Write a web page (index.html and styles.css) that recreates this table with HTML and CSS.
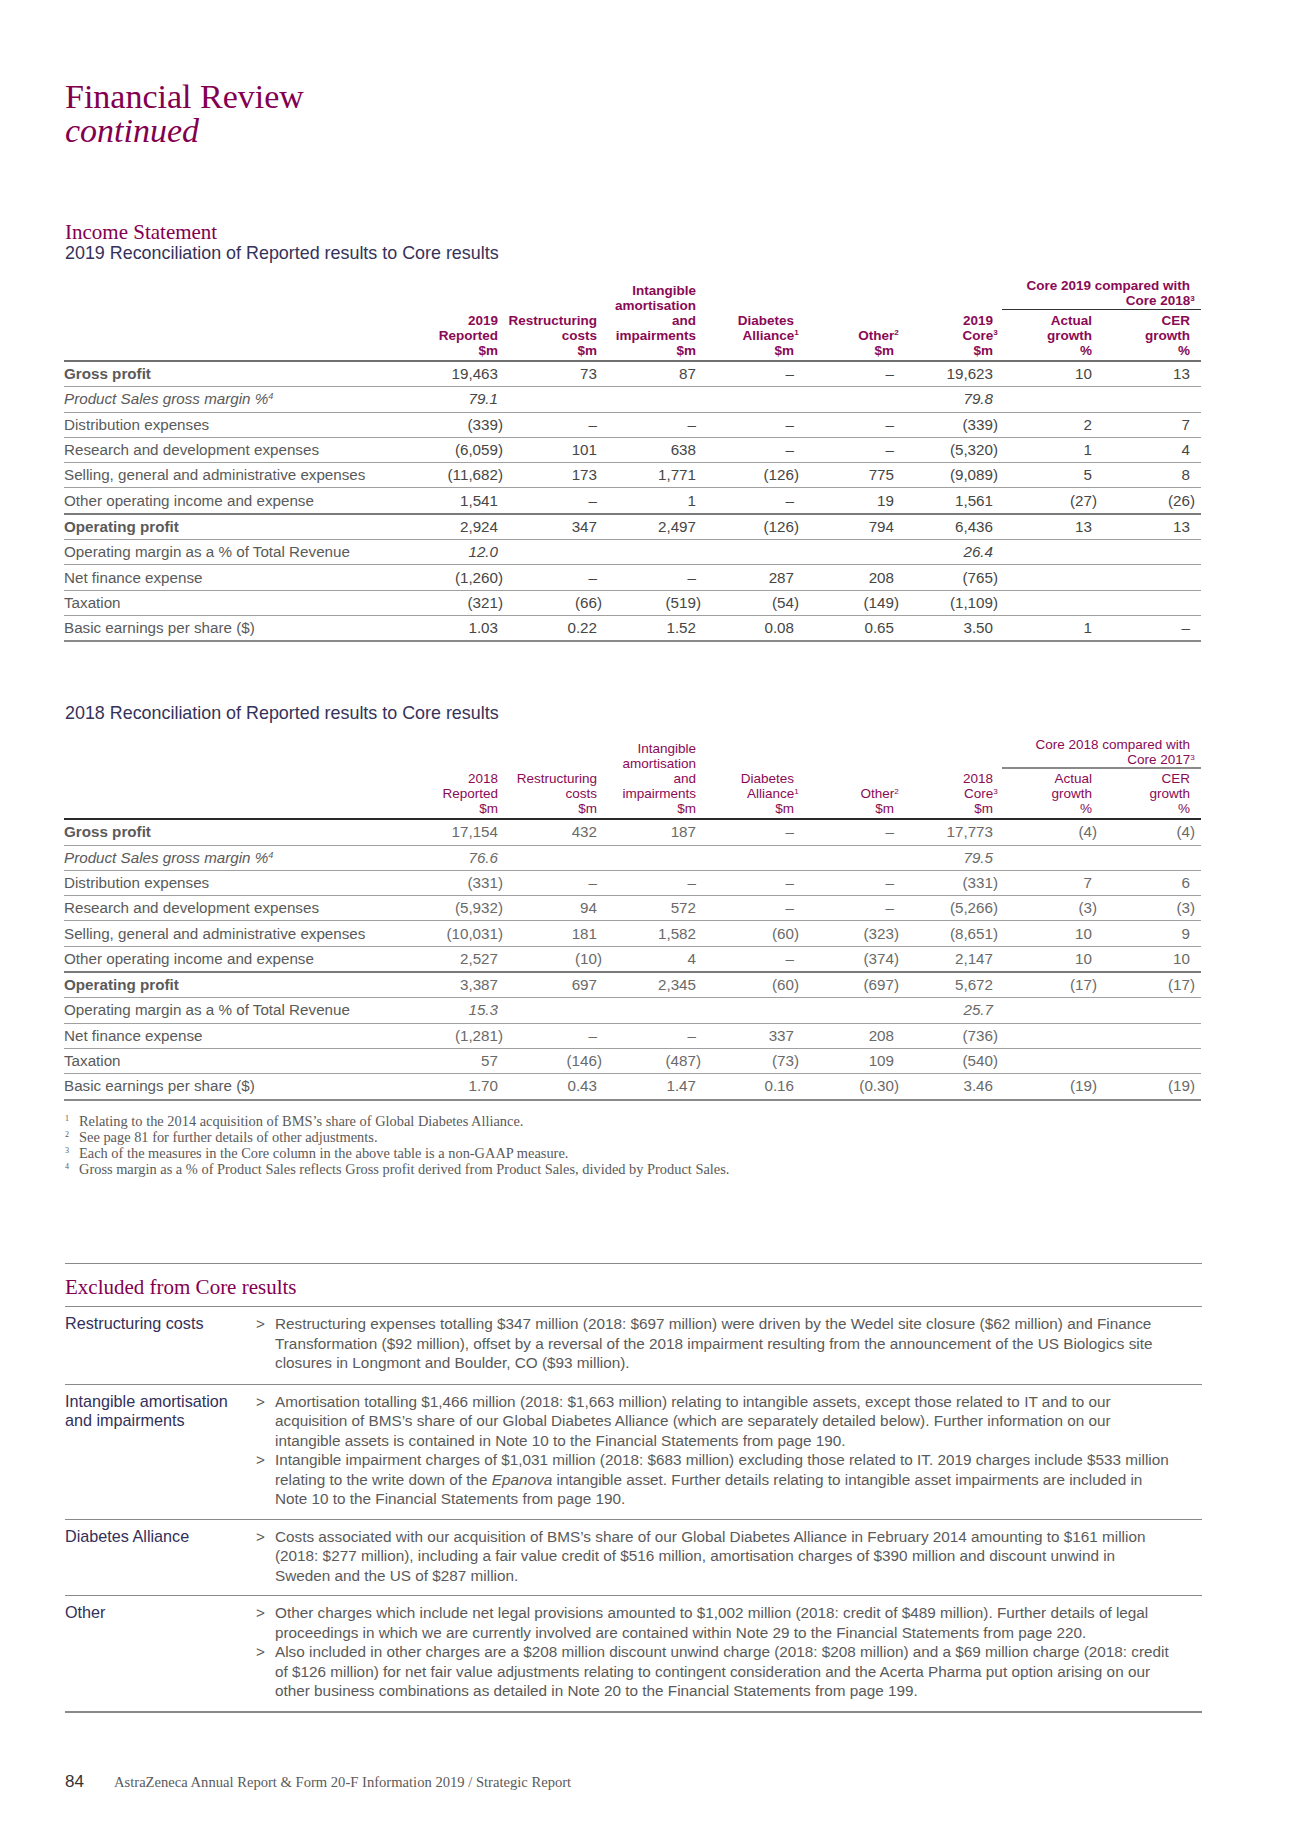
FILE: index.html
```html
<!DOCTYPE html>
<html lang="en">
<head>
<meta charset="utf-8">
<title>Financial Review continued</title>
<link rel="stylesheet" href="styles.css">
</head>
<body>
<div class="page">
  <h1 class="title">Financial Review<br><em>continued</em></h1>

  <h2 class="sec-title">Income Statement</h2>
  <h3 class="tbl-title">2019 Reconciliation of Reported results to Core results</h3>

  <table class="rec r19">
    <colgroup>
      <col class="w-lab"><col class="w-n"><col class="w-n1"><col class="w-n1"><col class="w-n"><col class="w-oth"><col class="w-core"><col class="w-act"><col class="w-cer">
    </colgroup>
    <thead>
      <tr>
        <th class="lab" rowspan="2"></th>
        <th rowspan="2">2019<br>Reported<br>$m</th>
        <th rowspan="2">Restructuring<br>costs<br>$m</th>
        <th rowspan="2">Intangible<br>amortisation<br>and<br>impairments<br>$m</th>
        <th rowspan="2">Diabetes<br>Alliance<sup>1</sup><br>$m</th>
        <th rowspan="2">Other<sup>2</sup><br>$m</th>
        <th rowspan="2" class="core">2019<br>Core<sup>3</sup><br>$m</th>
        <th colspan="2" class="grp">Core 2019 compared with<br>Core 2018<sup>3</sup></th>
      </tr>
      <tr>
        <th class="sub">Actual<br>growth<br>%</th>
        <th class="sub cer">CER<br>growth<br>%</th>
      </tr>
    </thead>
    <tbody>
      <tr class="b"><td class="lab">Gross profit</td><td>19,463</td><td>73</td><td>87</td><td>–</td><td>–</td><td class="core">19,623</td><td>10</td><td class="cer">13</td></tr>
      <tr class="it"><td class="lab">Product Sales gross margin %<sup>4</sup></td><td>79.1</td><td></td><td></td><td></td><td></td><td class="core">79.8</td><td></td><td class="cer"></td></tr>
      <tr><td class="lab">Distribution expenses</td><td>(339<span class="p">)</span></td><td>–</td><td>–</td><td>–</td><td>–</td><td class="core">(339<span class="p">)</span></td><td>2</td><td class="cer">7</td></tr>
      <tr><td class="lab">Research and development expenses</td><td>(6,059<span class="p">)</span></td><td>101</td><td>638</td><td>–</td><td>–</td><td class="core">(5,320<span class="p">)</span></td><td>1</td><td class="cer">4</td></tr>
      <tr><td class="lab">Selling, general and administrative expenses</td><td>(11,682<span class="p">)</span></td><td>173</td><td>1,771</td><td>(126<span class="p">)</span></td><td>775</td><td class="core">(9,089<span class="p">)</span></td><td>5</td><td class="cer">8</td></tr>
      <tr class="sep"><td class="lab">Other operating income and expense</td><td>1,541</td><td>–</td><td>1</td><td>–</td><td>19</td><td class="core">1,561</td><td>(27<span class="p">)</span></td><td class="cer">(26<span class="p">)</span></td></tr>
      <tr class="b"><td class="lab">Operating profit</td><td>2,924</td><td>347</td><td>2,497</td><td>(126<span class="p">)</span></td><td>794</td><td class="core">6,436</td><td>13</td><td class="cer">13</td></tr>
      <tr><td class="lab">Operating margin as a % of Total Revenue</td><td class="iv">12.0</td><td></td><td></td><td></td><td></td><td class="core iv">26.4</td><td></td><td class="cer"></td></tr>
      <tr><td class="lab">Net finance expense</td><td>(1,260<span class="p">)</span></td><td>–</td><td>–</td><td>287</td><td>208</td><td class="core">(765<span class="p">)</span></td><td></td><td class="cer"></td></tr>
      <tr><td class="lab">Taxation</td><td>(321<span class="p">)</span></td><td>(66<span class="p">)</span></td><td>(519<span class="p">)</span></td><td>(54<span class="p">)</span></td><td>(149<span class="p">)</span></td><td class="core">(1,109<span class="p">)</span></td><td></td><td class="cer"></td></tr>
      <tr class="last"><td class="lab">Basic earnings per share ($)</td><td>1.03</td><td>0.22</td><td>1.52</td><td>0.08</td><td>0.65</td><td class="core">3.50</td><td>1</td><td class="cer">–</td></tr>
    </tbody>
  </table>

  <h3 class="tbl-title t2">2018 Reconciliation of Reported results to Core results</h3>

  <table class="rec r18">
    <colgroup>
      <col class="w-lab"><col class="w-n"><col class="w-n1"><col class="w-n1"><col class="w-n"><col class="w-oth"><col class="w-core"><col class="w-act"><col class="w-cer">
    </colgroup>
    <thead>
      <tr>
        <th class="lab" rowspan="2"></th>
        <th rowspan="2">2018<br>Reported<br>$m</th>
        <th rowspan="2">Restructuring<br>costs<br>$m</th>
        <th rowspan="2">Intangible<br>amortisation<br>and<br>impairments<br>$m</th>
        <th rowspan="2">Diabetes<br>Alliance<sup>1</sup><br>$m</th>
        <th rowspan="2">Other<sup>2</sup><br>$m</th>
        <th rowspan="2" class="core">2018<br>Core<sup>3</sup><br>$m</th>
        <th colspan="2" class="grp">Core 2018 compared with<br>Core 2017<sup>3</sup></th>
      </tr>
      <tr>
        <th class="sub">Actual<br>growth<br>%</th>
        <th class="sub cer">CER<br>growth<br>%</th>
      </tr>
    </thead>
    <tbody>
      <tr class="b"><td class="lab">Gross profit</td><td>17,154</td><td>432</td><td>187</td><td>–</td><td>–</td><td class="core">17,773</td><td>(4<span class="p">)</span></td><td class="cer">(4<span class="p">)</span></td></tr>
      <tr class="it"><td class="lab">Product Sales gross margin %<sup>4</sup></td><td>76.6</td><td></td><td></td><td></td><td></td><td class="core">79.5</td><td></td><td class="cer"></td></tr>
      <tr><td class="lab">Distribution expenses</td><td>(331<span class="p">)</span></td><td>–</td><td>–</td><td>–</td><td>–</td><td class="core">(331<span class="p">)</span></td><td>7</td><td class="cer">6</td></tr>
      <tr><td class="lab">Research and development expenses</td><td>(5,932<span class="p">)</span></td><td>94</td><td>572</td><td>–</td><td>–</td><td class="core">(5,266<span class="p">)</span></td><td>(3<span class="p">)</span></td><td class="cer">(3<span class="p">)</span></td></tr>
      <tr><td class="lab">Selling, general and administrative expenses</td><td>(10,031<span class="p">)</span></td><td>181</td><td>1,582</td><td>(60<span class="p">)</span></td><td>(323<span class="p">)</span></td><td class="core">(8,651<span class="p">)</span></td><td>10</td><td class="cer">9</td></tr>
      <tr class="sep"><td class="lab">Other operating income and expense</td><td>2,527</td><td>(10<span class="p">)</span></td><td>4</td><td>–</td><td>(374<span class="p">)</span></td><td class="core">2,147</td><td>10</td><td class="cer">10</td></tr>
      <tr class="b"><td class="lab">Operating profit</td><td>3,387</td><td>697</td><td>2,345</td><td>(60<span class="p">)</span></td><td>(697<span class="p">)</span></td><td class="core">5,672</td><td>(17<span class="p">)</span></td><td class="cer">(17<span class="p">)</span></td></tr>
      <tr><td class="lab">Operating margin as a % of Total Revenue</td><td class="iv">15.3</td><td></td><td></td><td></td><td></td><td class="core iv">25.7</td><td></td><td class="cer"></td></tr>
      <tr><td class="lab">Net finance expense</td><td>(1,281<span class="p">)</span></td><td>–</td><td>–</td><td>337</td><td>208</td><td class="core">(736<span class="p">)</span></td><td></td><td class="cer"></td></tr>
      <tr><td class="lab">Taxation</td><td>57</td><td>(146<span class="p">)</span></td><td>(487<span class="p">)</span></td><td>(73<span class="p">)</span></td><td>109</td><td class="core">(540<span class="p">)</span></td><td></td><td class="cer"></td></tr>
      <tr class="last"><td class="lab">Basic earnings per share ($)</td><td>1.70</td><td>0.43</td><td>1.47</td><td>0.16</td><td>(0.30<span class="p">)</span></td><td class="core">3.46</td><td>(19<span class="p">)</span></td><td class="cer">(19<span class="p">)</span></td></tr>
    </tbody>
  </table>

  <ol class="notes">
    <li><span class="nn">1</span><span>Relating to the 2014 acquisition of BMS’s share of Global Diabetes Alliance.</span></li>
    <li><span class="nn">2</span><span>See page 81 for further details of other adjustments.</span></li>
    <li><span class="nn">3</span><span>Each of the measures in the Core column in the above table is a non-GAAP measure.</span></li>
    <li><span class="nn">4</span><span>Gross margin as a % of Product Sales reflects Gross profit derived from Product Sales, divided by Product Sales.</span></li>
  </ol>

  <section class="excl">
    <h2 class="excl-title">Excluded from Core results</h2>
    <div class="ex-row r1">
      <div class="ex-lab">Restructuring costs</div>
      <div class="ex-body">
        <div class="bl"><span class="mk">&gt;</span><span class="bt">Restructuring expenses totalling $347 million (2018: $697 million) were driven by the Wedel site closure ($62 million) and Finance<br>Transformation ($92 million), offset by a reversal of the 2018 impairment resulting from the announcement of the US Biologics site<br>closures in Longmont and Boulder, CO ($93 million).</span></div>
      </div>
    </div>
    <div class="ex-row">
      <div class="ex-lab">Intangible amortisation<br>and impairments</div>
      <div class="ex-body">
        <div class="bl"><span class="mk">&gt;</span><span class="bt">Amortisation totalling $1,466 million (2018: $1,663 million) relating to intangible assets, except those related to IT and to our<br>acquisition of BMS’s share of our Global Diabetes Alliance (which are separately detailed below). Further information on our<br>intangible assets is contained in Note 10 to the Financial Statements from page 190.</span></div>
        <div class="bl"><span class="mk">&gt;</span><span class="bt">Intangible impairment charges of $1,031 million (2018: $683 million) excluding those related to IT. 2019 charges include $533 million<br>relating to the write down of the <em>Epanova</em> intangible asset. Further details relating to intangible asset impairments are included in<br>Note 10 to the Financial Statements from page 190.</span></div>
      </div>
    </div>
    <div class="ex-row">
      <div class="ex-lab">Diabetes Alliance</div>
      <div class="ex-body">
        <div class="bl"><span class="mk">&gt;</span><span class="bt">Costs associated with our acquisition of BMS’s share of our Global Diabetes Alliance in February 2014 amounting to $161 million<br>(2018: $277 million), including a fair value credit of $516 million, amortisation charges of $390 million and discount unwind in<br>Sweden and the US of $287 million.</span></div>
      </div>
    </div>
    <div class="ex-row last">
      <div class="ex-lab">Other</div>
      <div class="ex-body">
        <div class="bl"><span class="mk">&gt;</span><span class="bt">Other charges which include net legal provisions amounted to $1,002 million (2018: credit of $489 million). Further details of legal<br>proceedings in which we are currently involved are contained within Note 29 to the Financial Statements from page 220.</span></div>
        <div class="bl"><span class="mk">&gt;</span><span class="bt">Also included in other charges are a $208 million discount unwind charge (2018: $208 million) and a $69 million charge (2018: credit<br>of $126 million) for net fair value adjustments relating to contingent consideration and the Acerta Pharma put option arising on our<br>other business combinations as detailed in Note 20 to the Financial Statements from page 199.</span></div>
      </div>
    </div>
  </section>

  <footer class="foot">
    <span class="pg">84</span>
    <span class="ft">AstraZeneca Annual Report &amp; Form 20-F Information 2019 / Strategic Report</span>
  </footer>
</div>
</body>
</html>
```

FILE: styles.css
```css
html, body {
  margin: 0;
  padding: 0;
  background: #ffffff;
}

.page {
  width: 1137px;
  padding: 80px 95px 0 65px;
  font-family: "Liberation Sans", Arial, sans-serif;
  color: #555555;
}

.title {
  margin: 0;
  font-family: "Liberation Serif", "Times New Roman", serif;
  font-weight: normal;
  font-size: 34px;
  line-height: 34px;
  color: #830051;
}

.title em {
  font-style: italic;
}

.sec-title {
  margin: 73px 0 0;
  font-family: "Liberation Serif", "Times New Roman", serif;
  font-weight: normal;
  font-size: 21px;
  line-height: 22px;
  color: #830051;
}

.tbl-title {
  margin: 0;
  font-weight: normal;
  font-size: 17.9px;
  line-height: 21px;
  color: #35325a;
}

.tbl-title.t2 {
  margin-top: 61px;
}

/* tables */
.rec {
  width: 1137px;
  margin-left: -1px;
  margin-top: 14px;
  border-collapse: collapse;
  table-layout: fixed;
  white-space: nowrap;
}

.rec.r18 {
  margin-top: 13px;
}

.w-lab { width: 336px; }
.w-n { width: 98px; }
.w-n1 { width: 99px; }
.w-oth { width: 100px; }
.w-core { width: 108px; }
.w-act { width: 90px; }
.w-cer { width: 109px; }

.rec th {
  padding: 0 0 2.5px 0;
  font-size: 13.5px;
  line-height: 15px;
  font-weight: bold;
  color: #8a0a55;
  text-align: right;
  vertical-align: bottom;
}

.rec.r18 th {
  font-weight: normal;
}

.rec th.lab {
  text-align: left;
}

.rec th.grp {
  padding: 0 11px 1px 0;
  border-bottom: 1px solid #333333;
  vertical-align: top;
}

.rec.r18 th.grp {
  padding-bottom: 0;
  border-bottom: 2px solid #8a8a8a;
}

.rec th.sub {
  padding-top: 2.5px;
}

.rec.r18 th.sub {
  padding-top: 1.5px;
}

.rec thead tr:last-child th,
.rec thead th[rowspan] {
  border-bottom: 2px solid #707070;
}

.rec.r18 thead tr:last-child th,
.rec.r18 thead th[rowspan] {
  border-bottom: 2px solid #2a2a2a;
}

.rec .core {
  padding-right: 9px;
}

.rec .cer {
  padding-right: 11px;
}

.rec td {
  height: 24.3px;
  padding: 0;
  font-size: 15.2px;
  line-height: 18px;
  color: #464646;
  text-align: right;
  vertical-align: middle;
  border-bottom: 1px solid #a0a0a0;
}

.rec.r18 td {
  color: #6a6a6a;
}

.rec td.lab {
  text-align: left;
  color: #5a5a5a;
}

.rec tr.b td.lab {
  font-weight: bold;
}

.rec tr.it td {
  font-style: italic;
}

.rec td.iv {
  font-style: italic;
}

.rec tr.sep td {
  border-bottom: 2px solid #7a7a7a;
}

.rec tr.last td {
  border-bottom: 2px solid #8a8a8a;
}

.rec sup {
  font-size: 0.6em;
  line-height: 0;
  vertical-align: 0.5em;
}

.rec th sup {
  margin-right: -0.6em;
}

.p {
  margin-right: -0.33em;
}

/* notes */
.notes {
  list-style: none;
  margin: 12px 0 0;
  padding: 0;
  font-family: "Liberation Serif", "Times New Roman", serif;
  font-size: 14.4px;
  line-height: 16.3px;
  color: #5a5a5a;
}

.notes li {
  display: flex;
}

.nn {
  flex: 0 0 14px;
  font-size: 8px;
  line-height: 12px;
}

/* excluded */
.excl {
  margin-top: 85.5px;
  border-top: 1px solid #8a8a8a;
}

.excl-title {
  margin: 0;
  padding: 11.5px 0 8.5px;
  font-family: "Liberation Serif", "Times New Roman", serif;
  font-weight: normal;
  font-size: 21px;
  line-height: 22px;
  color: #830051;
}

.ex-row {
  display: grid;
  grid-template-columns: 191px 1fr;
  padding: 7px 0 10px;
  border-top: 1px solid #8a8a8a;
  font-size: 15.3px;
  line-height: 19.5px;
}

.ex-row.r1 {
  padding-bottom: 11px;
}

.ex-row.last {
  border-bottom: 2px solid #8a8a8a;
}

.ex-lab {
  font-size: 16.2px;
  color: #33305a;
}

.ex-body {
  color: #5a5a5a;
  white-space: nowrap;
}

.bl {
  display: flex;
}

.mk {
  flex: 0 0 19px;
}

.bt em {
  font-style: italic;
}

/* footer */
.foot {
  display: flex;
  align-items: baseline;
  margin-top: 59px;
  line-height: 20px;
}

.pg {
  width: 49px;
  font-size: 17px;
  color: #333333;
}

.ft {
  font-family: "Liberation Serif", "Times New Roman", serif;
  font-size: 14.6px;
  color: #5a5a5a;
}
```
